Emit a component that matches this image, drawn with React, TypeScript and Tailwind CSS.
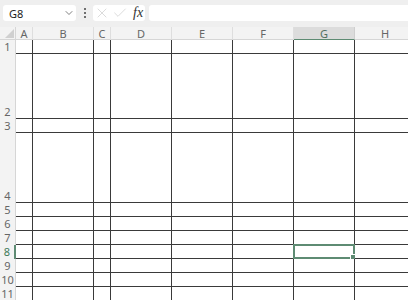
import { ChevronDown, X, Check } from "lucide-react";

const cols = ["A", "B", "C", "D", "E", "F", "G", "H"];
const rowHeights = ["h-[14px]", "h-[65px]", "h-[14px]", "h-[70px]", "h-[14px]", "h-[14px]", "h-[14px]", "h-[14px]", "h-[14px]", "h-[14px]", "h-[14px]"];

const App = () => {
  return (
    <div className="w-[408px] h-[300px] overflow-hidden bg-white font-['Noto_Sans','Liberation_Sans',sans-serif] text-[11px] text-[#666]">
      {/* Formula bar */}
      <div className="h-[27px] bg-[#efefef] flex items-start pt-[5px]">
        <div className="ml-[3px] w-[73px] h-[16px] bg-white rounded-[3px] flex items-center pl-[6px] pr-[1px] text-[#222]">
          <span className="flex-1 leading-none">G8</span>
          <ChevronDown className="w-[12px] h-[12px] text-[#555]" strokeWidth={1.5} />
        </div>
        <div className="w-[17px] h-[16px] flex flex-col items-center justify-center gap-[2px]">
          <span className="block w-[2px] h-[2px] bg-[#444] rounded-full" />
          <span className="block w-[2px] h-[2px] bg-[#444] rounded-full" />
          <span className="block w-[2px] h-[2px] bg-[#444] rounded-full" />
        </div>
        <div className="w-[52px] h-[16px] bg-white rounded-[3px] flex items-center pl-[1px]">
          <X className="w-[16px] h-[16px] text-[#c8c8c8]" strokeWidth={1} />
          <Check className="w-[16px] h-[16px] ml-[2px] text-[#c8c8c8]" strokeWidth={1} />
          <span className="ml-[5px] font-['Liberation_Serif',serif] italic text-[14px] text-[#333] leading-none">fx</span>
        </div>
        <div className="ml-[4px] flex-1 h-[16px] bg-white rounded-l-[3px]" />
      </div>

      {/* Sheet */}
      <div className="grid grid-cols-[16px_17px_61px_17px_61px_61px_61px_61px_61px]">
        {/* Column headers */}
        <div className="h-[13px] bg-[#f3f3f3] border-b border-r border-[#d6d6d6] flex items-end justify-end">
          <div className="w-0 h-0 border-l-[9px] border-l-transparent border-b-[9px] border-b-[#d0d0d0] mr-[1px] mb-[1px]" />
        </div>
        {cols.map((c) => (
          <div
            key={c}
            className={
              c === "G"
                ? "h-[13px] bg-[#dcdcdc] border-b border-b-[#5e8b73] border-r border-r-[#cfcfcf] flex items-center justify-center leading-none text-[#4f6f5f]"
                : "h-[13px] bg-[#f3f3f3] border-b border-b-[#d6d6d6] border-r border-r-[#dedede] flex items-center justify-center leading-none"
            }
          >
            {c}
          </div>
        ))}

        {/* Rows */}
        {rowHeights.map((h, i) => (
          <Row key={i} n={i + 1} h={h} />
        ))}
      </div>
    </div>
  );
};

const Row = ({ n, h }: { n: number; h: string }) => {
  const sel = n === 8;
  return (
    <>
      <div
        className={
          sel
            ? `${h} bg-[#f3f3f3] border-r-2 border-r-[#5e8b73] flex items-end justify-center leading-[14px] text-[#3f7a5a]`
            : `${h} bg-[#f3f3f3] border-r border-r-[#d6d6d6] flex items-end justify-center leading-[14px]`
        }
      >
        {n}
      </div>
      {cols.map((c) => (
        <div key={c} className={`${h} relative border-r border-b border-[#3a3a3a]`}>
          {sel && c === "G" && (
            <div className="absolute -left-[1px] -top-[1px] -right-[1px] -bottom-[1px] border-2 border-[#5e8b73]">
              <div className="absolute -right-[3px] -bottom-[3px] w-[4px] h-[4px] bg-[#5e8b73] border border-white box-content" />
            </div>
          )}
        </div>
      ))}
    </>
  );
};

export default App;
